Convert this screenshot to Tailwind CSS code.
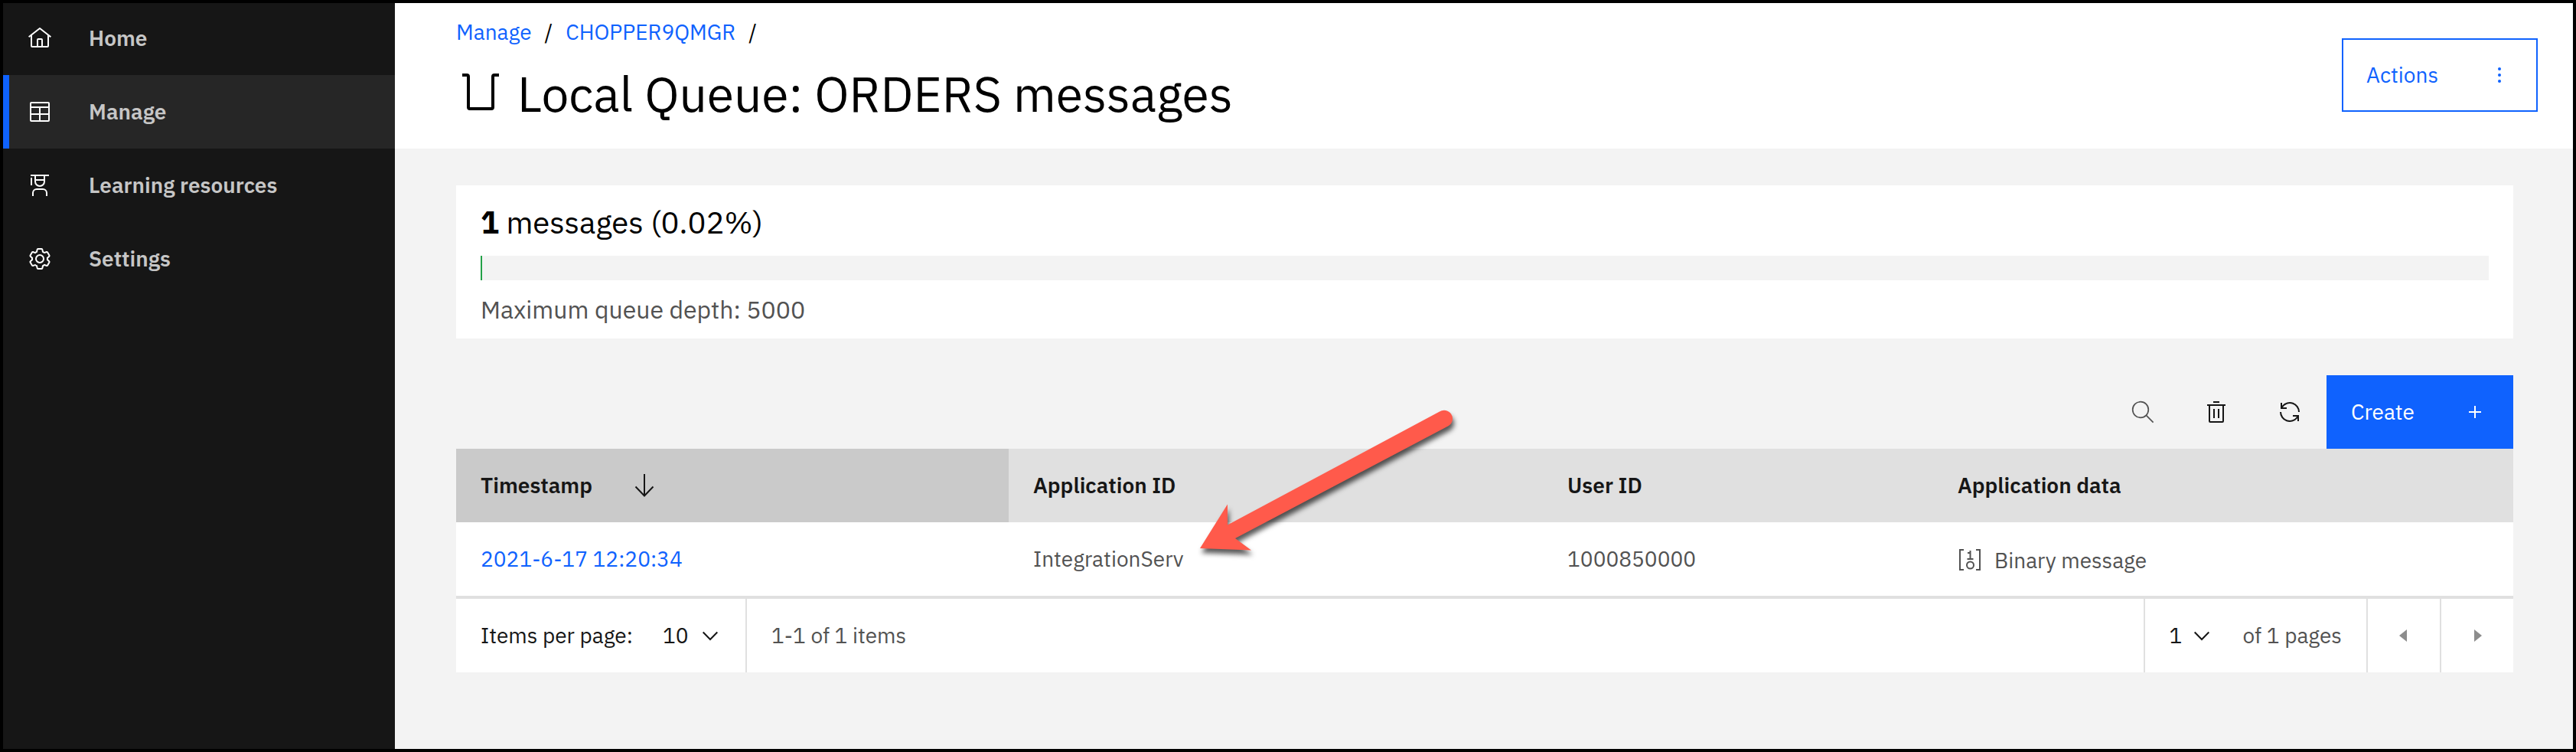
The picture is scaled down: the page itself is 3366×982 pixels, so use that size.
<!DOCTYPE html>
<html lang="en">
<head>
<meta charset="utf-8">
<meta name="viewport" content="width=device-width, initial-scale=1">
<title>Local Queue: ORDERS messages</title>
<script src="https://cdn.jsdelivr.net/npm/@tailwindcss/browser@4"></script>
</head>
<body class="flex min-h-screen border-4 border-black bg-[#f3f3f3] font-['IBM_Plex_Sans',Roboto,'Noto_Sans',sans-serif] text-[28px] leading-9 text-black">

<nav aria-label="Main" class="flex w-[512px] shrink-0 flex-col bg-[#161616] font-semibold text-[#c6c6c6]">
  <a href="#" class="flex h-[94px] items-center gap-12 pb-0.5 pl-8">
    <svg class="size-8 fill-white" viewBox="0 0 32 32" aria-hidden="true"><path d="M16.6123,2.2138a1.01,1.01,0,0,0-1.2427,0L1,13.4194l1.2427,1.5717L4,13.6208V26a2.0041,2.0041,0,0,0,2,2H26a2.0037,2.0037,0,0,0,2-2V13.63L29.7573,15,31,13.4282ZM18,26H14V18h4Zm2,0V18a2.0023,2.0023,0,0,0-2-2H14a2.002,2.002,0,0,0-2,2v8H6V12.0615l10-7.79,10,7.8005V26Z"/></svg>
    Home
  </a>
  <a href="#" aria-current="page" class="flex h-24 items-center gap-12 border-l-8 border-[#0f62fe] bg-[#262626] pl-6">
    <svg class="size-8 fill-none stroke-white stroke-2" viewBox="0 0 32 32" aria-hidden="true"><rect x="4" y="4" width="24" height="24" rx="1"/><path d="M4 10h24M4 19h24M16 10v18"/></svg>
    Manage
  </a>
  <a href="#" class="flex h-24 items-center gap-12 pl-8">
    <svg class="size-8 fill-none stroke-white stroke-2" viewBox="0 0 32 32" aria-hidden="true"><path d="M4 3h24M5 6v10M10 3v8a6 6 0 0 0 12 0V3M10 9h12M7 30v-4a5 5 0 0 1 5-5h8a5 5 0 0 1 5 5v4"/></svg>
    Learning resources
  </a>
  <a href="#" class="flex h-24 items-center gap-12 pl-8">
    <svg class="size-8 fill-white" viewBox="0 0 32 32" aria-hidden="true"><path d="M27,16.76c0-.25,0-.5,0-.76s0-.51,0-.77l1.92-1.68A2,2,0,0,0,29.3,11L26.94,7a2,2,0,0,0-1.73-1,2,2,0,0,0-.64.1l-2.43.82a11.35,11.35,0,0,0-1.31-.75l-.51-2.52a2,2,0,0,0-2-1.61H13.64a2,2,0,0,0-2,1.61l-.51,2.52a11.48,11.48,0,0,0-1.32.75L7.43,6.06A2,2,0,0,0,6.79,6,2,2,0,0,0,5.06,7L2.7,11a2,2,0,0,0,.41,2.51L5,15.24c0,.25,0,.5,0,.76s0,.51,0,.77L3.11,18.45A2,2,0,0,0,2.7,21L5.06,25a2,2,0,0,0,1.73,1,2,2,0,0,0,.64-.1l2.43-.82a11.35,11.35,0,0,0,1.31.75l.51,2.52a2,2,0,0,0,2,1.61h4.72a2,2,0,0,0,2-1.61l.51-2.52a11.48,11.48,0,0,0,1.32-.75l2.42.82a2,2,0,0,0,.64.1,2,2,0,0,0,1.73-1L29.3,21a2,2,0,0,0-.41-2.51ZM25.21,24l-3.43-1.16a8.86,8.86,0,0,1-2.71,1.57L18.36,28H13.64l-.71-3.55a9.36,9.36,0,0,1-2.7-1.57L6.79,24,4.43,20l2.72-2.4a8.9,8.9,0,0,1,0-3.13L4.43,12,6.79,8l3.43,1.16a8.86,8.86,0,0,1,2.71-1.57L13.64,4h4.72l.71,3.55a9.36,9.36,0,0,1,2.7,1.57L25.21,8,27.57,12l-2.72,2.4a8.9,8.9,0,0,1,0,3.13L27.57,20Z"/><path d="M16,22a6,6,0,1,1,6-6A5.94,5.94,0,0,1,16,22Zm0-10a3.91,3.91,0,0,0-4,4,3.91,3.91,0,0,0,4,4,3.91,3.91,0,0,0,4-4A3.91,3.91,0,0,0,16,12Z"/></svg>
    Settings
  </a>
</nav>

<div class="min-w-0 flex-1">
  <header class="flex h-[190px] items-start justify-between bg-white pr-[46px] pl-20">
    <div class="pt-5">
      <nav aria-label="Breadcrumb" class="flex gap-[17px]">
        <a href="#" class="text-[#0f62fe]">Manage</a><span>/</span>
        <a href="#" class="text-[#0f62fe]">CHOPPER9QMGR</a><span>/</span>
      </nav>
      <h1 class="mt-[22px] flex items-center gap-4 text-[64px] leading-20">
        <svg class="size-16" viewBox="0 0 64 64" aria-hidden="true"><path d="M8 8h6a2 2 0 0 1 2 2v40a2 2 0 0 0 2 2h28a2 2 0 0 0 2-2V10a2 2 0 0 1 2-2h6" fill="none" stroke="#000" stroke-width="4"/></svg>
        Local Queue: ORDERS messages
      </h1>
    </div>
    <button type="button" class="mt-[46px] flex h-24 w-64 items-center justify-between border-2 border-[#0f62fe] pr-8 pl-[30px] text-[#0f62fe]">
      Actions
      <svg class="size-8 fill-current" viewBox="0 0 32 32" aria-hidden="true"><circle cx="16" cy="8" r="2"/><circle cx="16" cy="16" r="2"/><circle cx="16" cy="24" r="2"/></svg>
    </button>
  </header>

  <main class="pt-12 pr-[78px] pl-20">
    <section class="h-[200px] bg-white px-8 pt-6">
      <h2 class="text-[40px] leading-12"><strong class="font-bold">1</strong> messages (0.02%)</h2>
      <div class="mt-5 h-8 bg-[#f3f3f3]"><div class="h-full min-w-0.5 bg-[#24a148]" style="width:0.02%"></div></div>
      <p class="mt-4 text-[32px] leading-11 text-[#525252]">Maximum queue depth: 5000</p>
    </section>

    <div class="mt-12 flex h-24 justify-end">
      <button type="button" aria-label="Search" class="flex w-24 items-center justify-center">
        <svg class="size-8 fill-none stroke-[#525252]" stroke-width="1.7" viewBox="0 0 32 32" aria-hidden="true"><circle cx="13" cy="13" r="10.3"/><path d="M20.4 20.4 29.6 29.6"/></svg>
      </button>
      <button type="button" aria-label="Delete" class="flex w-24 items-center justify-center">
        <svg class="size-8 fill-[#161616]" viewBox="0 0 32 32" aria-hidden="true"><path d="M12 12h2v12h-2zM18 12h2v12h-2zM4 6v2h2v20a2 2 0 0 0 2 2h16a2 2 0 0 0 2-2V8h2V6zM8 28V8h16v20zM12 2h8v2h-8z"/></svg>
      </button>
      <button type="button" aria-label="Refresh" class="flex w-24 items-center justify-center">
        <svg class="size-8 fill-[#161616]" viewBox="0 0 32 32" aria-hidden="true"><path d="M12 10H6.78A11 11 0 0 1 27 16h2A13 13 0 0 0 6 7.68V4H4v8h8zM20 22h5.22A11 11 0 0 1 5 16H3a13 13 0 0 0 23 8.32V28h2v-8h-8z"/></svg>
      </button>
      <button type="button" class="flex w-[244px] items-center justify-between bg-[#0f62fe] pr-[34px] pl-8 text-white">
        Create
        <svg class="size-8" viewBox="0 0 32 32" aria-hidden="true"><path d="M16 8v16M8 16h16" stroke="currentColor" stroke-width="2"/></svg>
      </button>
    </div>

    <div class="relative">
      <table class="w-full table-fixed text-left">
        <thead>
          <tr class="h-24 bg-[#e0e0e0] text-[#161616]">
            <th scope="col" aria-sort="descending" class="w-[26.86%] bg-[#cacaca] px-8 font-semibold">
              <button type="button" class="flex items-center gap-[52px]">Timestamp
                <svg class="size-8" viewBox="0 0 32 32" aria-hidden="true"><path d="M16 1v28M4.5 17.5 16 29.5 27.5 17.5" fill="none" stroke="currentColor" stroke-width="2"/></svg>
              </button>
            </th>
            <th scope="col" class="w-[25.97%] px-8 font-semibold">Application ID</th>
            <th scope="col" class="w-[18.97%] px-8 font-semibold">User ID</th>
            <th scope="col" class="px-8 font-semibold">Application data</th>
          </tr>
        </thead>
        <tbody>
          <tr class="h-24 bg-white text-[#525252]">
            <td class="px-8"><a href="#" class="text-[#0f62fe]">2021-6-17 12:20:34</a></td>
            <td class="px-8">IntegrationServ</td>
            <td class="px-8">1000850000</td>
            <td class="px-8">
              <div class="flex items-center gap-4 pt-1">
                <svg class="size-8 fill-none stroke-current stroke-2" viewBox="0 0 32 32" aria-hidden="true"><path d="M8 2H3v26h5M24 2h5v26h-5M13 6h3M16.500 3v11M12.500 14h8"/><ellipse cx="16.500" cy="22" rx="4.500" ry="4.500"/></svg>
                Binary message
              </div>
            </td>
          </tr>
        </tbody>
      </table>

      <!-- Annotation arrow pointing at the application ID -->
      <svg class="pointer-events-none absolute -top-14 left-[964px] h-[210px] w-[350px] drop-shadow-[2px_6px_3px_rgba(0,0,0,0.65)]" viewBox="1560 530 350 210" aria-hidden="true"><path d="M1568 716 1604 658.500 1604 685.500 1881 537.500A11 11 0 0 1 1893 556L1614 703 1635 718.500Z" fill="#ff5a4b"/></svg>
    </div>

    <div class="flex h-25 items-stretch border-t-4 border-[#e0e0e0] bg-white text-[#525252]">
      <div class="flex items-center border-r-2 border-[#e0e0e0] px-8 text-[#161616]">
        <label for="size" class="w-[238px]">Items per page:</label>
        <div class="relative">
          <select id="size" class="h-12 w-[76px] appearance-none bg-transparent"><option>10</option><option>20</option></select>
          <svg class="pointer-events-none absolute top-2 right-0 size-8" viewBox="0 0 32 32" aria-hidden="true"><path d="M8.700 11.500 18 21 27.300 11.500" fill="none" stroke="currentColor" stroke-width="2"/></svg>
        </div>
      </div>
      <span class="flex flex-1 items-center pl-8">1-1 of 1 items</span>
      <div class="flex items-center gap-[38px] border-l-2 border-[#e0e0e0] px-8">
        <div class="relative text-[#161616]">
          <select aria-label="Page" class="h-12 w-[58px] appearance-none bg-transparent"><option>1</option></select>
          <svg class="pointer-events-none absolute top-2 right-0 size-8" viewBox="0 0 32 32" aria-hidden="true"><path d="M6.700 11.500 16 21 25.300 11.500" fill="none" stroke="currentColor" stroke-width="2"/></svg>
        </div>
        <span>of 1 pages</span>
      </div>
      <button type="button" disabled aria-label="Previous page" class="flex w-24 items-center justify-center border-l-2 border-[#e0e0e0]">
        <svg class="size-8 fill-[#8d8d8d]" viewBox="0 0 32 32" aria-hidden="true"><path d="M20 24 10 16 20 8z"/></svg>
      </button>
      <button type="button" disabled aria-label="Next page" class="flex w-24 items-center justify-center border-l-2 border-[#e0e0e0]">
        <svg class="size-8 fill-[#8d8d8d]" viewBox="0 0 32 32" aria-hidden="true"><path d="M12 8 22 16 12 24z"/></svg>
      </button>
    </div>
  </main>
</div>
</body>
</html>
